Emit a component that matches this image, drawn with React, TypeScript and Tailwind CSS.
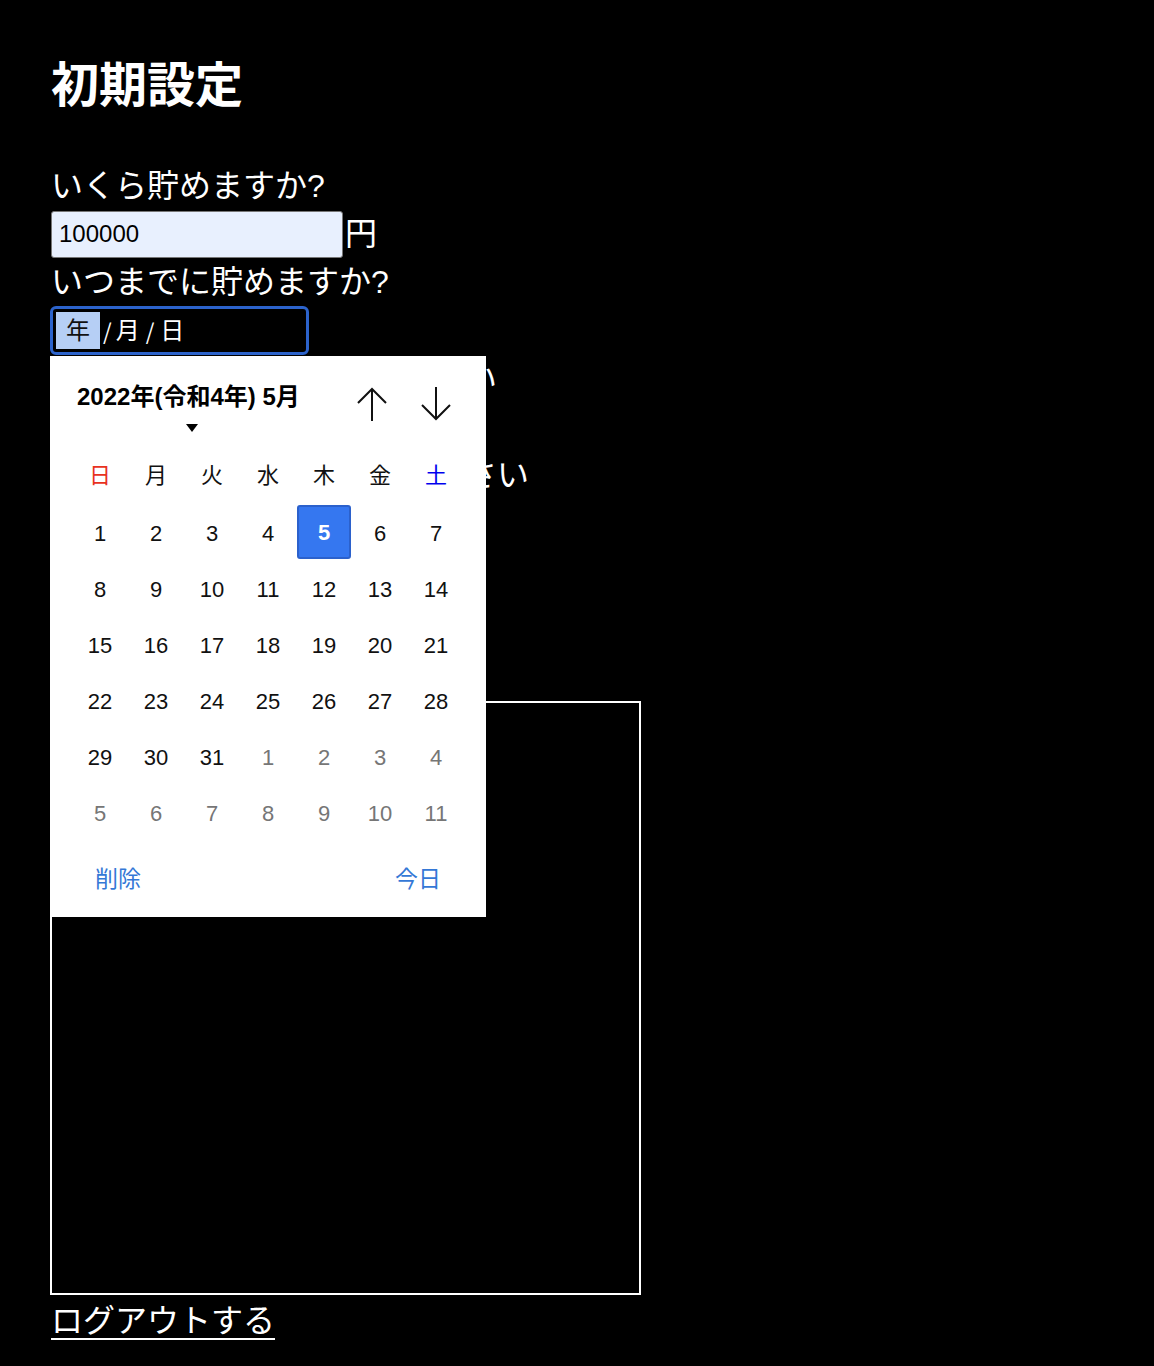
import React from 'react';

const weekdays = ['日', '月', '火', '水', '木', '金', '土'];

const days: { n: number; cur: boolean }[] = [
  ...Array.from({ length: 31 }, (_, i) => ({ n: i + 1, cur: true })),
  ...Array.from({ length: 11 }, (_, i) => ({ n: i + 1, cur: false })),
];

function DatePopup() {
  return (
    <div className="absolute left-[50px] top-[356px] w-[436px] h-[561px] bg-white text-black flex flex-col">
      <div className="flex justify-between pl-[27px] pr-[34px] pt-[26px] h-[91px]">
        <div className="flex flex-col items-center">
          <div className="text-[24px] leading-[30px] font-bold">2022年(令和4年) 5月</div>
          <svg width="12" height="8" viewBox="0 0 12 8" className="mt-[12px] ml-[8px]">
            <path d="M0 0 L12 0 L6 8 Z" fill="#000" />
          </svg>
        </div>
        <div className="flex gap-[32px] pt-[4px]">
          <svg width="32" height="36" viewBox="0 0 32 36" fill="none" stroke="#111" strokeWidth="2">
            <path d="M16 3 L16 35" />
            <path d="M2 17 L16 3 L30 17" />
          </svg>
          <svg width="32" height="36" viewBox="0 0 32 36" fill="none" stroke="#111" strokeWidth="2">
            <path d="M16 1 L16 33" />
            <path d="M2 19 L16 33 L30 19" />
          </svg>
        </div>
      </div>
      <div className="px-[22px]">
        <div className="grid grid-cols-7 h-[56px]">
          {weekdays.map((w, i) => (
            <div
              key={w}
              className={
                'flex items-center justify-center text-[22px] ' +
                (i === 0 ? 'text-[#e8321e]' : i === 6 ? 'text-[#0000ee]' : 'text-[#111]')
              }
            >
              {w}
            </div>
          ))}
        </div>
        <div className="grid grid-cols-7 mt-[2px]">
          {days.map((d, i) => (
            <div key={i} className="h-[56px] flex items-start justify-center">
              {d.cur && d.n === 5 ? (
                <div className="w-[54px] h-[54px] rounded-[3px] bg-[#3577f0] border-2 border-[#2b61cc] flex items-center justify-center text-white font-bold text-[22px]">
                  5
                </div>
              ) : (
                <div
                  className={
                    'h-[56px] flex items-center text-[22px] ' + (d.cur ? 'text-[#111]' : 'text-[#767676]')
                  }
                >
                  {d.n}
                </div>
              )}
            </div>
          ))}
        </div>
      </div>
      <div className="flex-1 flex items-center justify-between pl-[45px] pr-[45px] text-[23px] text-[#3478d6]">
        <span>削除</span>
        <span>今日</span>
      </div>
    </div>
  );
}

export default function App() {
  return (
    <div
      className="relative min-h-screen bg-black text-white pl-[51px] pt-[50px] pb-[30px]"
      style={{ fontFamily: '"Liberation Sans", "Noto Sans CJK JP", sans-serif' }}
    >
      <h1 className="text-[48px] leading-[72px] font-bold mb-[40px]">初期設定</h1>

      <div className="text-[32px] leading-[48px]">いくら貯めますか?</div>
      <div className="flex items-center h-[48px]">
        <input
          type="text"
          defaultValue="100000"
          className="w-[292px] h-[47px] bg-[#e8f0fe] text-black text-[24px] px-[7px] border border-[#767676] rounded-[3px] outline-none"
        />
        <span className="text-[32px] leading-[48px] ml-[2px]">円</span>
      </div>

      <div className="text-[32px] leading-[48px]">いつまでに貯めますか?</div>
      <div className="w-[259px] h-[49px] border-[3px] border-[#2c63cb] rounded-[6px] -ml-[1px] flex items-center pl-[3px] text-[24px]">
        <span className="bg-[#b6cff5] text-[#111] h-[37px] flex items-center px-[10px]">年</span>
        <span className="ml-[3px] mr-[4px] text-[22px]" style={{ fontFamily: '"Noto Sans CJK JP", sans-serif' }}>/</span>
        <span>月</span>
        <span className="ml-[6px] mr-[6px] text-[22px]" style={{ fontFamily: '"Noto Sans CJK JP", sans-serif' }}>/</span>
        <span>日</span>
      </div>

      <div className="text-[32px] leading-[48px]">貯金の目的を入力してください</div>
      <input
        type="text"
        className="w-[292px] h-[48px] bg-white text-black text-[24px] px-[7px] border border-[#767676] rounded-[3px]"
      />
      <div className="text-[32px] leading-[48px]">毎月の貯金額を入力してください</div>
      <input
        type="text"
        className="w-[292px] h-[48px] bg-white text-black text-[24px] px-[7px] border border-[#767676] rounded-[3px]"
      />
      <div className="h-[154px] pt-[20px]">
        <button className="bg-[#efefef] text-black text-[24px] px-[12px] py-[6px] rounded-[3px] border border-[#767676]">
          設定する
        </button>
      </div>

      <div className="w-[591px] h-[594px] border-2 border-white -ml-[1px]"></div>

      <a href="#" className="block w-fit mt-[2px] text-[32px] leading-[48px] underline underline-offset-[6px] decoration-2 text-white">
        ログアウトする
      </a>

      <DatePopup />
    </div>
  );
}
